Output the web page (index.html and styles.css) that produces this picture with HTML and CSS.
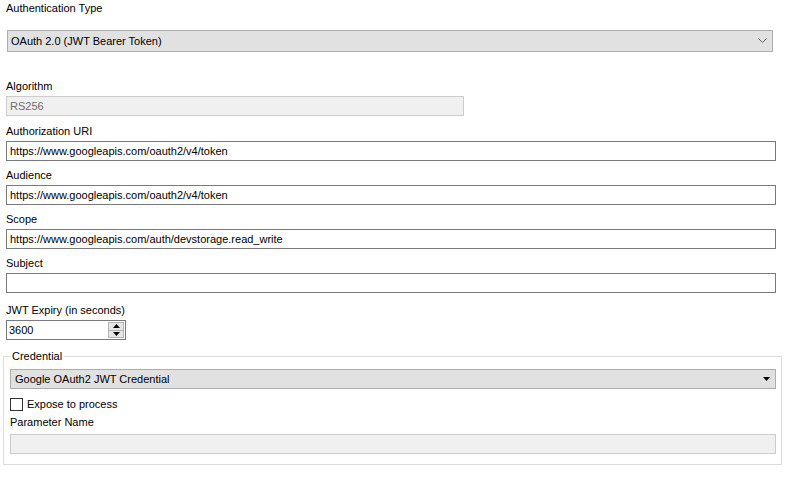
FILE: index.html
```html
<!DOCTYPE html>
<html>
<head>
<meta charset="utf-8">
<link rel="stylesheet" href="styles.css">
</head>
<body>
<div class="form">
  <div class="label first">Authentication Type</div>
  <div class="combo flat">
    <span class="combo-text">OAuth 2.0 (JWT Bearer Token)</span>
    <svg class="chev" width="9" height="6" viewBox="0 0 9 6"><path d="M0.5 0.5 L4.5 4.5 L8.5 0.5" fill="none" stroke="#606060" stroke-width="1"/></svg>
  </div>

  <div class="label after-combo">Algorithm</div>
  <div class="input disabled short">RS256</div>

  <div class="label uri">Authorization URI</div>
  <div class="input">https://www.googleapis.com/oauth2/v4/token</div>

  <div class="label">Audience</div>
  <div class="input">https://www.googleapis.com/oauth2/v4/token</div>

  <div class="label">Scope</div>
  <div class="input">https://www.googleapis.com/auth/devstorage.read_write</div>

  <div class="label">Subject</div>
  <div class="input"></div>

  <div class="label jwt">JWT Expiry (in seconds)</div>
  <div class="spinner">
    <span class="spin-text">3600</span>
    <div class="spin-btns">
      <div class="spin-btn"><svg width="7" height="4" viewBox="0 0 7 4"><path d="M3.5 0 L7 4 L0 4 Z" fill="#000"/></svg></div>
      <div class="spin-btn"><svg width="7" height="4" viewBox="0 0 7 4"><path d="M0 0 L7 0 L3.5 4 Z" fill="#000"/></svg></div>
    </div>
  </div>

  <fieldset class="group">
    <legend class="legend">Credential</legend>
    <div class="combo cred">
      <span class="combo-text">Google OAuth2 JWT Credential</span>
      <svg class="tri" width="7" height="4" viewBox="0 0 7 4"><path d="M0 0 L7 0 L3.5 4 Z" fill="#000"/></svg>
    </div>
    <div class="check-row">
      <span class="checkbox"></span>
      <span class="check-label">Expose to process</span>
    </div>
    <div class="label param">Parameter Name</div>
    <div class="input disabled param-input"></div>
  </fieldset>
</div>
</body>
</html>
```
FILE: styles.css
```css
html, body {
  margin: 0;
  padding: 0;
  background: #ffffff;
}
body {
  width: 787px;
  height: 477px;
  overflow: hidden;
  font-family: "Liberation Sans", Arial, sans-serif;
  font-size: 11px;
  color: #000000;
}
.form {
  display: flex;
  flex-direction: column;
  align-items: flex-start;
  padding: 1px 0 0 6px;
}
.label {
  height: 14px;
  line-height: 14px;
  margin-top: 7px;
  margin-bottom: 3px;
  white-space: nowrap;
}
.label.first {
  margin-top: 0;
  margin-bottom: 0;
}
.label.after-combo {
  margin-top: 27px;
}
.label.uri {
  margin-top: 8px;
}
.label.jwt {
  margin-top: 10px;
  margin-bottom: 3px;
}
.combo {
  box-sizing: border-box;
  display: flex;
  align-items: center;
  justify-content: space-between;
  background: #e1e1e1;
  border: 1px solid #adadad;
}
.combo.flat {
  margin-top: 15px;
  margin-left: 1px;
  width: 766px;
  height: 22px;
  padding: 0 5px 0 3px;
}
.combo-text {
  line-height: 14px;
  white-space: nowrap;
}
.chev {
  display: block;
}
.input {
  box-sizing: border-box;
  width: 770px;
  height: 20px;
  border: 1px solid #7a7a7a;
  background: #ffffff;
  padding: 0 3px;
  line-height: 18px;
  white-space: nowrap;
}
.input.disabled {
  background: #f0f0f0;
  border-color: #cccccc;
  color: #6d6d6d;
}
.input.short {
  width: 458px;
}
.spinner {
  box-sizing: border-box;
  width: 120px;
  height: 20px;
  border: 1px solid #7a7a7a;
  display: flex;
  align-items: stretch;
  justify-content: space-between;
}
.spin-text {
  padding-left: 2px;
  line-height: 18px;
}
.spin-btns {
  width: 16px;
  display: flex;
  flex-direction: column;
  padding: 1px 1px 1px 0;
}
.spin-btn {
  flex: 1;
  display: flex;
  align-items: center;
  justify-content: center;
  background: #e6e6e6;
  border: 1px solid #b4b4b4;
}
.spin-btn + .spin-btn {
  border-top: none;
}
.spin-btn svg {
  display: block;
}
.group {
  box-sizing: border-box;
  margin: 9px 0 0 -3px;
  width: 779px;
  border: 1px solid #dcdcdc;
  padding: 0 6px 10px 6px;
  min-inline-size: 0;
}
.legend {
  padding: 0 2px;
  line-height: 14px;
  height: 14px;
}
.combo.cred {
  margin-top: 6px;
  width: 766px;
  height: 20px;
  padding: 0 5px 0 4px;
}
.tri {
  display: block;
}
.check-row {
  display: flex;
  align-items: center;
  margin-top: 9px;
  height: 13px;
}
.checkbox {
  box-sizing: border-box;
  width: 13px;
  height: 13px;
  border: 1px solid #333333;
  background: #ffffff;
}
.check-label {
  margin-left: 4px;
  line-height: 13px;
}
.label.param {
  margin-top: 4px;
  margin-bottom: 5px;
}
.input.param-input {
  width: 766px;
}
```
